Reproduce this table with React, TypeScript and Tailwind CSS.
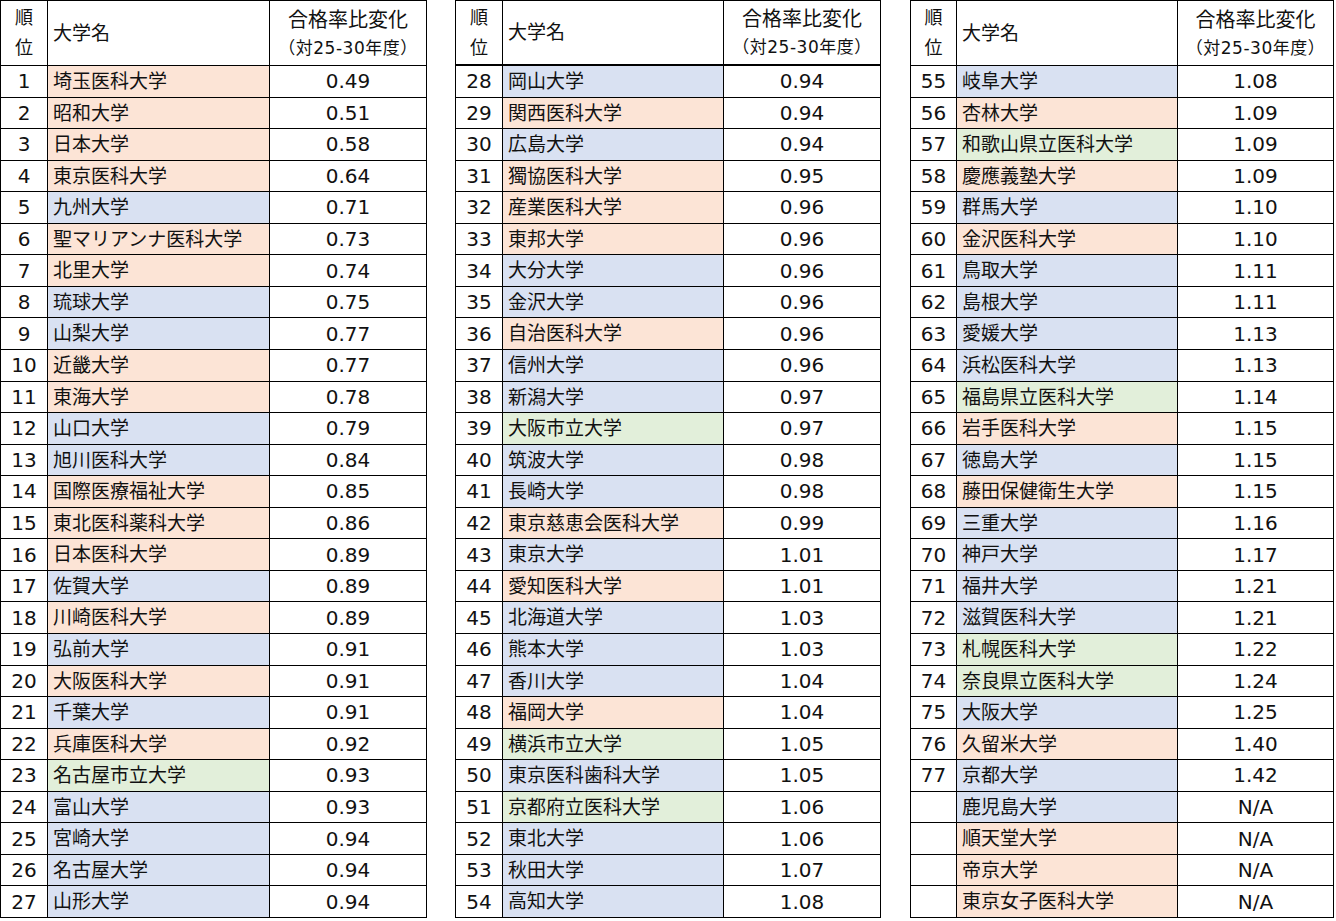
import React from "react";

type Kind = "o" | "b" | "g";

interface Row {
   rank: string;
   name: string;
   value: string;
   kind: Kind;
}

const raw: Array<[string, string, string, Kind]> = [
   ["1", "埼玉医科大学", "0.49", "o"],
   ["2", "昭和大学", "0.51", "o"],
   ["3", "日本大学", "0.58", "o"],
   ["4", "東京医科大学", "0.64", "o"],
   ["5", "九州大学", "0.71", "b"],
   ["6", "聖マリアンナ医科大学", "0.73", "o"],
   ["7", "北里大学", "0.74", "o"],
   ["8", "琉球大学", "0.75", "b"],
   ["9", "山梨大学", "0.77", "b"],
   ["10", "近畿大学", "0.77", "o"],
   ["11", "東海大学", "0.78", "o"],
   ["12", "山口大学", "0.79", "b"],
   ["13", "旭川医科大学", "0.84", "b"],
   ["14", "国際医療福祉大学", "0.85", "o"],
   ["15", "東北医科薬科大学", "0.86", "o"],
   ["16", "日本医科大学", "0.89", "o"],
   ["17", "佐賀大学", "0.89", "b"],
   ["18", "川崎医科大学", "0.89", "o"],
   ["19", "弘前大学", "0.91", "b"],
   ["20", "大阪医科大学", "0.91", "o"],
   ["21", "千葉大学", "0.91", "b"],
   ["22", "兵庫医科大学", "0.92", "o"],
   ["23", "名古屋市立大学", "0.93", "g"],
   ["24", "富山大学", "0.93", "b"],
   ["25", "宮崎大学", "0.94", "b"],
   ["26", "名古屋大学", "0.94", "b"],
   ["27", "山形大学", "0.94", "b"],
   ["28", "岡山大学", "0.94", "b"],
   ["29", "関西医科大学", "0.94", "o"],
   ["30", "広島大学", "0.94", "b"],
   ["31", "獨協医科大学", "0.95", "o"],
   ["32", "産業医科大学", "0.96", "o"],
   ["33", "東邦大学", "0.96", "o"],
   ["34", "大分大学", "0.96", "b"],
   ["35", "金沢大学", "0.96", "b"],
   ["36", "自治医科大学", "0.96", "o"],
   ["37", "信州大学", "0.96", "b"],
   ["38", "新潟大学", "0.97", "b"],
   ["39", "大阪市立大学", "0.97", "g"],
   ["40", "筑波大学", "0.98", "b"],
   ["41", "長崎大学", "0.98", "b"],
   ["42", "東京慈恵会医科大学", "0.99", "o"],
   ["43", "東京大学", "1.01", "b"],
   ["44", "愛知医科大学", "1.01", "o"],
   ["45", "北海道大学", "1.03", "b"],
   ["46", "熊本大学", "1.03", "b"],
   ["47", "香川大学", "1.04", "b"],
   ["48", "福岡大学", "1.04", "o"],
   ["49", "横浜市立大学", "1.05", "g"],
   ["50", "東京医科歯科大学", "1.05", "b"],
   ["51", "京都府立医科大学", "1.06", "g"],
   ["52", "東北大学", "1.06", "b"],
   ["53", "秋田大学", "1.07", "b"],
   ["54", "高知大学", "1.08", "b"],
   ["55", "岐阜大学", "1.08", "b"],
   ["56", "杏林大学", "1.09", "o"],
   ["57", "和歌山県立医科大学", "1.09", "g"],
   ["58", "慶應義塾大学", "1.09", "o"],
   ["59", "群馬大学", "1.10", "b"],
   ["60", "金沢医科大学", "1.10", "o"],
   ["61", "鳥取大学", "1.11", "b"],
   ["62", "島根大学", "1.11", "b"],
   ["63", "愛媛大学", "1.13", "b"],
   ["64", "浜松医科大学", "1.13", "b"],
   ["65", "福島県立医科大学", "1.14", "g"],
   ["66", "岩手医科大学", "1.15", "o"],
   ["67", "徳島大学", "1.15", "b"],
   ["68", "藤田保健衛生大学", "1.15", "o"],
   ["69", "三重大学", "1.16", "b"],
   ["70", "神戸大学", "1.17", "b"],
   ["71", "福井大学", "1.21", "b"],
   ["72", "滋賀医科大学", "1.21", "b"],
   ["73", "札幌医科大学", "1.22", "g"],
   ["74", "奈良県立医科大学", "1.24", "g"],
   ["75", "大阪大学", "1.25", "b"],
   ["76", "久留米大学", "1.40", "o"],
   ["77", "京都大学", "1.42", "b"],
   ["", "鹿児島大学", "N/A", "b"],
   ["", "順天堂大学", "N/A", "o"],
   ["", "帝京大学", "N/A", "o"],
   ["", "東京女子医科大学", "N/A", "o"],
];

const rows: Array<Row> = raw.map(([rank, name, value, kind]) => ({ rank, name, value, kind }));

const fill: Record<Kind, string> = {
   o: "bg-[#fce4d6]",
   b: "bg-[#d9e1f2]",
   g: "bg-[#e2efda]",
};

function RankTable({ data, cols, thickHead }: { data: Array<Row>; cols: string; thickHead?: boolean }) {
   const headB = thickHead ? "border-b-2" : "border-b";
   return (
      <div className={`grid ${cols} grid-rows-[65px_repeat(27,minmax(0,1fr))] h-[918px] border-l border-t border-black`}>
         {/* header */}
         <div className={`border-r ${headB} border-black flex flex-col items-center justify-center text-[18px] leading-[30px]`}>
            <span>順</span>
            <span>位</span>
         </div>
         <div className={`border-r ${headB} border-black flex items-center pl-[5px] text-[19px]`}>大学名</div>
         <div className={`border-r ${headB} border-black flex flex-col items-center justify-center`}>
            <span className="text-[20px] leading-[30px]">合格率比変化</span>
            <span className="text-[17px] leading-[27px] tracking-[0.5px]">（対25-30年度）</span>
         </div>

         {data.map((r, i) => (
            <React.Fragment key={i}>
               <div className="border-r border-b border-black flex items-center justify-center text-[20px]">{r.rank}</div>
               <div className={`border-r border-b border-black flex items-center pl-[5px] text-[19px] whitespace-nowrap ${fill[r.kind]}`}>
                  {r.name}
               </div>
               <div className="border-r border-b border-black flex items-center justify-center text-[20px]">{r.value}</div>
            </React.Fragment>
         ))}
      </div>
   );
}

export default function App() {
   return (
      <div
         className="flex items-start w-[1336px] h-[921px] bg-white text-[#111] overflow-hidden"
         style={{ fontFamily: '"DejaVu Sans", "Noto Sans CJK JP", sans-serif' }}
      >
         <RankTable data={rows.slice(0, 27)} cols="grid-cols-[47px_222px_157px]" />
         <div className="ml-[28px]">
            <RankTable data={rows.slice(27, 54)} cols="grid-cols-[47px_221px_157px]" thickHead />
         </div>
         <div className="ml-[29px]">
            <RankTable data={rows.slice(54, 81)} cols="grid-cols-[46px_221px_156px]" />
         </div>
      </div>
   );
}
